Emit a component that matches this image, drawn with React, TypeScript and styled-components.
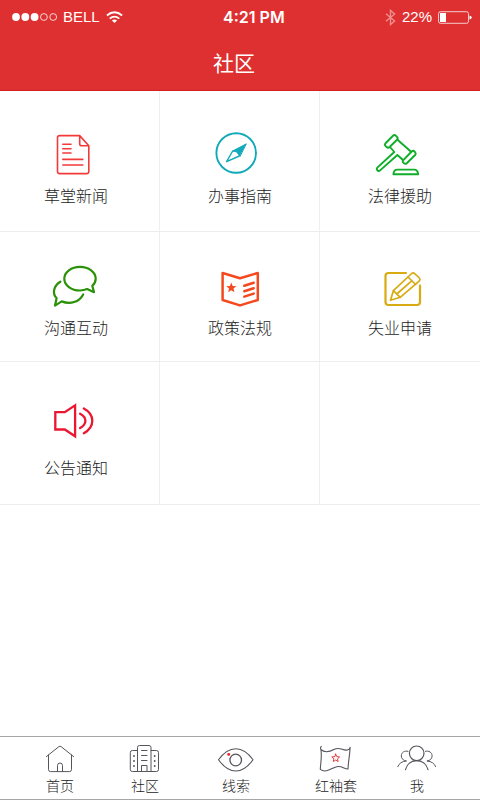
import React from "react";
import styled, { createGlobalStyle } from "styled-components";

const GlobalStyle = createGlobalStyle`
  *, *::before, *::after { box-sizing: border-box; }
  body {
    margin: 0;
    background: #fff;
    color: #1c1c1c;
    font-family: "Noto Sans CJK SC", "Noto Sans", sans-serif;
  }
`;

const Screen = styled.div`
  display: flex;
  flex-direction: column;
  min-height: 100vh;
`;

const Header = styled.header`
  background: #df3031;
  border-bottom: 1px solid #d42020;
  color: #fff;
`;

const StatusBar = styled.div`
  display: flex;
  align-items: center;
  justify-content: space-between;
  height: 34px;
  padding: 0 8px 0 12px;
  font-family: "Liberation Sans", Arial, sans-serif;
  font-size: 15px;
  line-height: 20px;
`;

const StatusGroup = styled.div`
  display: flex;
  align-items: center;
  gap: 6px;
`;

const Clock = styled.time`
  font-family: Inter, sans-serif;
  font-size: 16px;
  font-weight: 600;
`;

const Title = styled.h1`
  margin: 0;
  padding: 14px 12px 14px 0;
  font-size: 21px;
  font-weight: 400;
  line-height: 28px;
  text-align: center;
`;

const TileRow = styled.div<{ $height: number; $foot: number }>`
  display: grid;
  grid-template-columns: repeat(3, 1fr);
  min-height: ${(p) => p.$height}px;
  border-bottom: 1px solid #ededed;

  & > * {
    padding: 0 0 ${(p) => p.$foot}px;
  }
  & > :first-child {
    padding-right: 8px;
  }
  & > :last-child {
    box-shadow: none;
  }
`;

const Tile = styled.button`
  display: flex;
  flex-direction: column;
  align-items: center;
  justify-content: flex-end;
  gap: 5px;
  border: 0;
  background: none;
  box-shadow: inset -1px 0 #efefef;
  color: #1c1c1c;
  font-family: inherit;
  font-size: 16px;
  font-weight: 300;
  line-height: 24px;
  cursor: pointer;
`;

const EmptyTile = styled.div`
  box-shadow: inset -1px 0 #efefef;
`;

const TileIcon = styled.svg.attrs({
  viewBox: "0 0 56 48",
  fill: "none",
  stroke: "currentColor",
  strokeLinecap: "round",
  strokeLinejoin: "round",
  "aria-hidden": true,
})<{ $color: string }>`
  display: block;
  width: 56px;
  height: 48px;
  color: ${(p) => p.$color};
`;

const TabBar = styled.nav`
  display: grid;
  grid-template-columns: 84fr 86fr 96fr 104fr 58fr;
  margin-top: auto;
  padding: 6px 34px 4px 18px;
  border-top: 1px solid #a6a6a6;
  border-bottom: 1px solid #a6a6a6;
`;

const Tab = styled.a`
  display: flex;
  flex-direction: column;
  align-items: center;
  color: #1c1c1c;
  font-size: 14px;
  font-weight: 300;
  line-height: 20px;
  text-decoration: none;
`;

const TabIcon = styled.svg.attrs({
  viewBox: "0 0 44 32",
  fill: "none",
  stroke: "#55555b",
  strokeLinecap: "round",
  strokeLinejoin: "round",
  "aria-hidden": true,
})`
  display: block;
  width: 44px;
  height: 32px;
`;

const starPoints = (cx: number, cy: number, r: number, inner: number) =>
  Array.from({ length: 10 }, (_, i) => {
    const radius = i % 2 ? inner : r;
    const a = (Math.PI * i) / 5 - Math.PI / 2;
    return `${(cx + radius * Math.cos(a)).toFixed(2)},${(cy + radius * Math.sin(a)).toFixed(2)}`;
  }).join(" ");

const NewsIcon = () => (
  <TileIcon $color="#f23a3a" strokeWidth="1.6">
    <path d="M31.7 5.6H11.5a2 2 0 0 0-2 2v34a2 2 0 0 0 2 2h27.3a2 2 0 0 0 2-2V15.8zM31.7 5.6v8.2a2 2 0 0 0 2 2h7" />
    <path d="M14.8 14.3H23M14.8 18.7H23M14.8 23H23M14.8 29.4h20M14.8 35h20" />
  </TileIcon>
);

const CompassIcon = () => (
  <TileIcon $color="#12a9ba" strokeWidth="1.9">
    <circle cx="24.2" cy="23" r="19.8" />
    <path d="M34 14 20.7 21l3.800.8 3.300 4.300z" fill="currentColor" strokeWidth="1" />
    <path d="M20.700 21 14.600 31.700 27.300 26" strokeWidth="1.400" />
  </TileIcon>
);

const GavelIcon = () => (
  <TileIcon $color="#0fae28" strokeWidth="1.9">
    <path d="M13.5 13.2 21 5.8q1.5-1.5 3 0l1 1q1.4 1.4 0 2.9l-7.400 7.300q-1.500 1.500-3 0l-1.100-1.100q-1.200-1.300 0-2.700z" />
    <path d="m31.300 30.200 8.400-8.700q1.500-1.300 2.800 0l.7.8q1.200 1.300-.1 2.700l-8.300 8.200q-1.500 1.300-2.800 0l-.7-.6q-1.200-1.200 0-2.400z" />
    <path d="m25.500 9.700 13.600 12M18 17l4.300 5L5.300 37.600q-1.200 1.400 0 2.700 1.400 1.300 2.800.1L25.400 25l5.600 5" />
    <path d="M21.400 44.300q.3-4.700 4-4.700h16.900q3.400 0 3.900 4.700z" />
  </TileIcon>
);

const ChatIcon = () => (
  <TileIcon $color="#2a9108" strokeWidth="2.200">
    <path d="M39.200 27.100c-2.200.9-4.500 1.400-7.200 1.400-8.700 0-15.700-5.300-15.700-11.800S23.300 4.900 32 4.900s15.700 5.300 15.700 11.800c0 2.700-1.300 5.200-3.400 7.100L46 30.200z" />
    <path d="M12.300 19.700C5.500 24 4 31.500 8.600 36.300L7 43.600l6.700-4.200c8.500 3.300 17.500.7 21.500-7" />
  </TileIcon>
);

const PolicyIcon = () => (
  <TileIcon $color="#f4491f" strokeWidth="2.500">
    <path d="M10.600 11 28 16.300 45.800 11v27L28 43.400 10.600 38z" />
    <path d="m32.300 23.800 9.400-3M32.300 29.200l9.400-3M32.300 34.600l9.400-3" />
    <polygon points={starPoints(19.3, 25.9, 5.4, 2.3)} fill="currentColor" stroke="none" />
  </TileIcon>
);

const ApplyIcon = () => (
  <TileIcon $color="#d8ab12" strokeWidth="2.200">
    <path d="M34 11H16.500a3 3 0 0 0-3 3v26a3 3 0 0 0 3 3h28.500a3 3 0 0 0 3-3V23.500" />
    <g strokeWidth="1.700">
      <path d="M18.500 38.300 21.400 28.700 39.700 11.500q1.500-1.300 3 .1l4.700 4.400q1.300 1.400 0 2.800L28.200 35.300z" />
      <path d="m21.400 28.700 6.800 6.600M36 15l7.600 7.500M24.800 32 40 18.700" />
    </g>
  </TileIcon>
);

const SpeakerIcon = () => (
  <TileIcon $color="#eb1630" strokeWidth="2.300">
    <path d="M7.300 10.200h9.500l10.300-6.800v30.900l-10.300-6.800H7.300z" strokeLinejoin="miter" />
    <path d="M32.100 11.800q5.300 2.700 5.300 7t-5.300 7.300M35.800 6.500q8.500 4.500 8.500 12.200T35.800 31.300" />
  </TileIcon>
);

const HomeIcon = () => (
  <TabIcon>
    <path d="M8.400 13.600 20.800 3.700q1.200-1 2.400 0l12.400 9.900M10.500 12v14.600q0 2 2 2h19q2 0 2-2V12" />
    <path d="M19.500 28.500v-6a2.500 2.500 0 0 1 5 0v6" />
  </TabIcon>
);

const CommunityIcon = () => (
  <TabIcon>
    <path d="M14.500 28.500v-24q0-2 2-2h9.500q2 0 2 2v24" />
    <path d="M14.500 7.500H9.300q-2 0-2 2v17q0 2 2 2h24.200q2 0 2-2v-17q0-2-2-2H28" />
    <path d="M18.500 7.500H24M18.500 12.500H24M18.500 17.500H24M18.500 28.500v-6H24v6" />
    <path d="M11 13v.1M11 18v.1M11 23v.1M31.700 13v.1M31.700 18v.1M31.700 23v.1" strokeWidth="1.900" />
  </TabIcon>
);

const ClueIcon = () => (
  <TabIcon>
    <path d="M4.500 16.700Q12.500 5.700 21.800 5.700T39 16.700Q31 28 21.800 28T4.500 16.700z" strokeWidth="1.100" />
    <circle cx="21.700" cy="17" r="5.800" strokeWidth="1.300" />
    <circle cx="14.700" cy="11.400" r="1.400" fill="#f01818" stroke="none" />
  </TabIcon>
);

const FlagIcon = () => (
  <TabIcon>
    <path d="M7.300 3.300Q6 4.500 6.900 6.500c4 3.800 9.500 2 13.500-.3 5.500-2.600 8.400 1.600 12.900.8 2-.3 2.800-1.300 2.800-2.700-.2 7-1.800 14-2.100 21.700-4.500 0-5.800-3.500-11.300-2.300-5 1.200-10.700 7-16.400 2.700.3-6.800 1.800-12.800.6-19.900" strokeWidth="1.100" />
    <polygon points={starPoints(21.7, 15.2, 4.1, 1.9)} stroke="#e83a3a" />
  </TabIcon>
);

const MeIcon = () => (
  <TabIcon>
    <circle cx="21.700" cy="10.300" r="7.300" strokeWidth="1.200" />
    <path d="M10.500 26.600C12 21 16.500 17.700 21.700 17.700S31.500 21 33 26.600" strokeWidth="1.200" />
    <path d="M13 8.300c-3.500-1-6.700 1.200-6.700 4.500 0 2.800 2 4.800 5.200 5.200-4.700.3-7.500 2.500-8.700 5.600M30.400 8.300c3.500-1 6.700 1.200 6.700 4.500 0 2.800-2 4.800-5.200 5.200 4.700.3 7.500 2.500 8.700 5.600" />
  </TabIcon>
);

const SignalIcon = () => (
  <svg width="45" height="10" viewBox="0 0 45 10" role="img" aria-label="Signal">
    {[4, 13.3, 22.6].map((x) => (
      <circle key={x} cx={x} cy="5" r="3.900" fill="#fff" />
    ))}
    {[31.9, 41.2].map((x) => (
      <circle key={x} cx={x} cy="5" r="3.400" fill="none" stroke="#fff" strokeWidth=".8" />
    ))}
  </svg>
);

const WifiIcon = () => (
  <svg width="17" height="13" viewBox="0 0 17 13" fill="none" stroke="#fff" strokeWidth="1.800" role="img" aria-label="Wi-Fi">
    <path d="M.9 4.500q7.600-6.400 15.200 0M3.700 7.600q4.800-4 9.600 0" />
    <path d="M8.500 12 5.900 9.500q2.600-2 5.200 0z" fill="#fff" stroke="none" />
  </svg>
);

const BluetoothIcon = () => (
  <svg width="11" height="17" viewBox="0 0 11 17" fill="none" stroke="#fff" strokeWidth="1.400" opacity=".45" role="img" aria-label="Bluetooth">
    <path d="M1 4.700 9.600 12 5.500 15.600V1.400L9.600 5 1 12.300" />
  </svg>
);

const BatteryIcon = () => (
  <svg width="34" height="13" viewBox="0 0 34 13" role="img" aria-label="Battery">
    <rect x=".5" y=".7" width="30" height="11.600" rx="2" fill="none" stroke="#fff" strokeOpacity=".75" />
    <rect x="2" y="2" width="6" height="9" fill="#fff" />
    <path d="M31.500 4.500q2.200.6 2.200 2t-2.200 2z" fill="#fff" />
  </svg>
);

const tileRows = [
  {
    height: 141,
    foot: 24,
    tiles: [
      { label: "草堂新闻", Icon: NewsIcon },
      { label: "办事指南", Icon: CompassIcon },
      { label: "法律援助", Icon: GavelIcon },
    ],
  },
  {
    height: 130,
    foot: 22,
    tiles: [
      { label: "沟通互动", Icon: ChatIcon },
      { label: "政策法规", Icon: PolicyIcon },
      { label: "失业申请", Icon: ApplyIcon },
    ],
  },
  { height: 143, foot: 25, tiles: [{ label: "公告通知", Icon: SpeakerIcon }, null, null] },
];

const tabs = [
  { id: "home", label: "首页", Icon: HomeIcon },
  { id: "community", label: "社区", Icon: CommunityIcon },
  { id: "clues", label: "线索", Icon: ClueIcon },
  { id: "armband", label: "红袖套", Icon: FlagIcon },
  { id: "me", label: "我", Icon: MeIcon },
];

export default function App() {
  return (
    <Screen>
      <GlobalStyle />
      <Header>
        <StatusBar>
          <StatusGroup>
            <SignalIcon />
            <span>BELL</span>
            <WifiIcon />
          </StatusGroup>
          <Clock>4:21 PM</Clock>
          <StatusGroup>
            <BluetoothIcon />
            <span>22%</span>
            <BatteryIcon />
          </StatusGroup>
        </StatusBar>
        <Title>社区</Title>
      </Header>
      <main>
        {tileRows.map((row, r) => (
          <TileRow key={r} $height={row.height} $foot={row.foot}>
            {row.tiles.map((tile, i) =>
              tile ? (
                <Tile key={tile.label} type="button">
                  <tile.Icon />
                  {tile.label}
                </Tile>
              ) : (
                <EmptyTile key={i} />
              )
            )}
          </TileRow>
        ))}
      </main>
      <TabBar>
        {tabs.map(({ id, label, Icon }) => (
          <Tab key={id} href={`#${id}`} aria-current={id === "community" ? "page" : undefined}>
            <Icon />
            {label}
          </Tab>
        ))}
      </TabBar>
    </Screen>
  );
}
